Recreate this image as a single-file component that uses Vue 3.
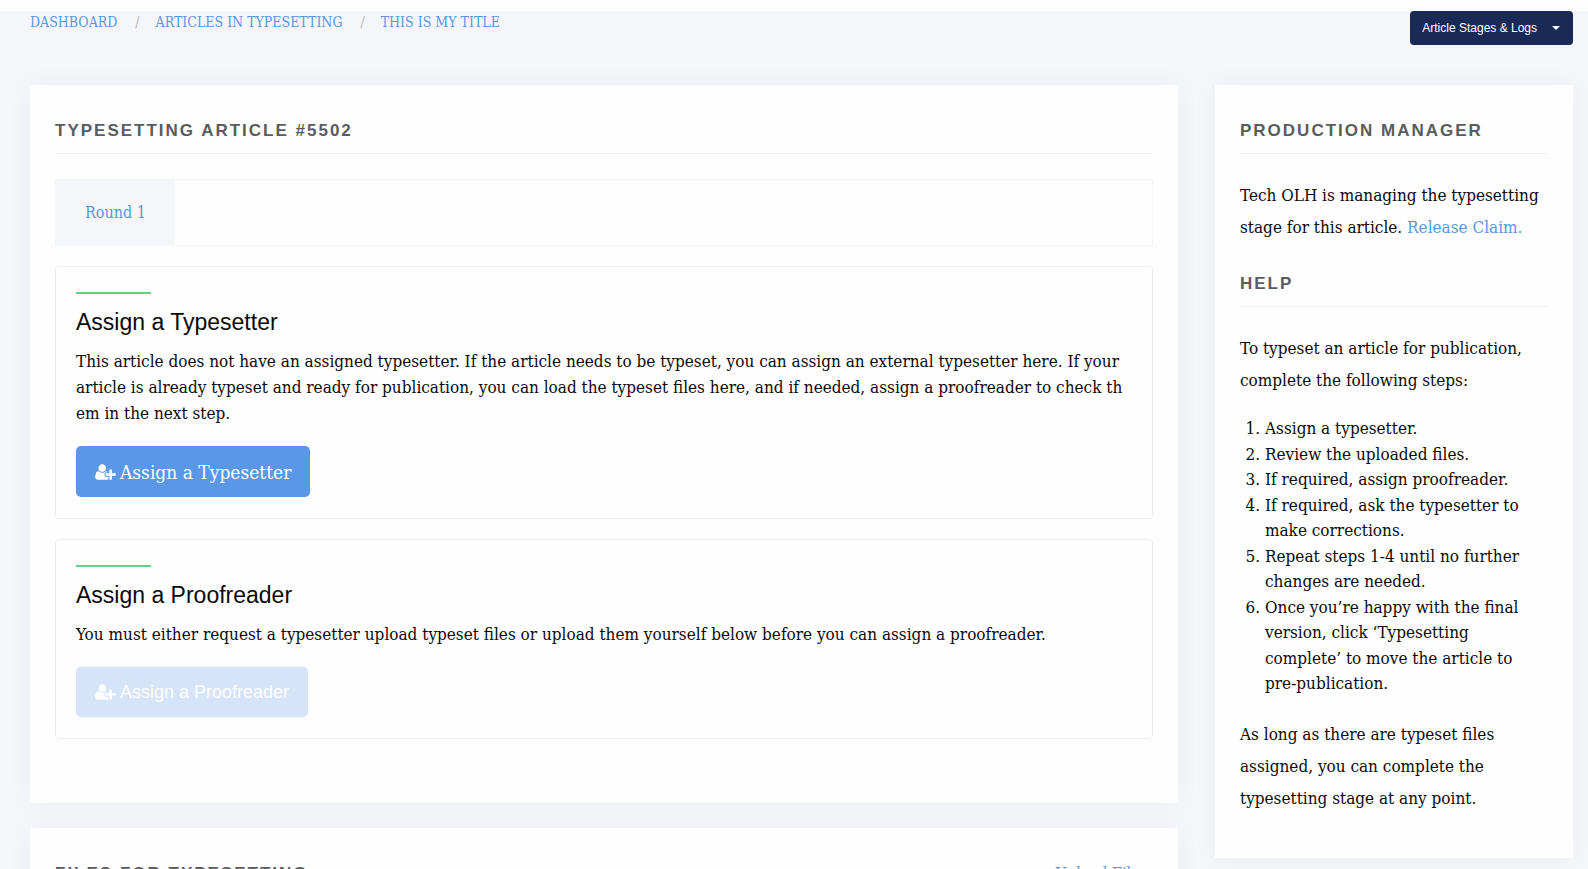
<script setup>
const crumbs = ['Dashboard', 'Articles in Typesetting', 'This is my title']
const steps = [
  'Assign a typesetter.',
  'Review the uploaded files.',
  'If required, assign proofreader.',
  'If required, ask the typesetter to make corrections.',
  'Repeat steps 1-4 until no further changes are needed.',
  'Once you’re happy with the final version, click ‘Typesetting complete’ to move the article to pre-publication.',
]
const userPlus =
  'M704 896q-159 0-271.5-112.5T320 512t112.5-271.5T704 128t271.5 112.5T1088 512 975.5 783.5 704 896zm960 128h352q13 0 22.5 9.5t9.5 22.5v192q0 13-9.5 22.5t-22.5 9.5h-352v352q0 13-9.5 22.5t-22.5 9.5h-192q-13 0-22.5-9.5t-9.5-22.5v-352h-352q-13 0-22.5-9.5t-9.5-22.5v-192q0-13 9.5-22.5t22.5-9.5h352V672q0-13 9.5-22.5t22.5-9.5h192q13 0 22.5 9.5t9.5 22.5v352zm-736 224q0 52 38 90t90 38h256v238q-68 50-171 50H267q-121 0-194-69T0 1405q0-53 3.5-103.5t14-109T44 1084t43-97.5 62-81 85.5-53.5T346 832q19 0 39 17 79 61 154.5 91.5T704 971t164.5-30.5T1023 849q20-17 39-17 132 0 217 96h-223q-52 0-90 38t-38 90v192z'
</script>

<template>
  <div class="page">
    <header class="topbar">
      <nav aria-label="Breadcrumb">
        <ol class="crumbs">
          <li v-for="c in crumbs" :key="c"><a href="#">{{ c }}</a></li>
        </ol>
      </nav>
      <button class="stages" type="button">
        Article Stages &amp; Logs
        <svg viewBox="0 0 8 4" aria-hidden="true"><path d="M0 0h8L4 4z" /></svg>
      </button>
    </header>

    <div class="columns">
      <main class="main">
        <section class="card first">
          <div class="title"><h2>Typesetting Article #5502</h2></div>
          <ul class="tabs">
            <li><a href="#round-1">Round 1</a></li>
          </ul>
          <div id="round-1">
            <article class="callout">
              <h3>Assign a Typesetter</h3>
              <p>
                This article does not have an assigned typesetter. If the article needs to be typeset, you can assign an external typesetter here. If your<br />
                article is already typeset and ready for publication, you can load the typeset files here, and if needed, assign a proofreader to check th<br />
                em in the next step.
              </p>
              <a class="action" href="#">
                <svg viewBox="0 0 2048 1792" aria-hidden="true"><path :d="userPlus" /></svg>
                <span>Assign a Typesetter</span>
              </a>
            </article>
            <article class="callout">
              <h3>Assign a Proofreader</h3>
              <p>You must either request a typesetter upload typeset files or upload them yourself below before you can assign a proofreader.</p>
              <button class="action" type="button" disabled>
                <svg viewBox="0 0 2048 1792" aria-hidden="true"><path :d="userPlus" /></svg>
                <span>Assign a Proofreader</span>
              </button>
            </article>
          </div>
        </section>

        <section class="card">
          <div class="title">
            <h2>Files for Typesetting</h2>
            <a href="#">Upload Files</a>
          </div>
        </section>
      </main>

      <aside class="card side">
        <div class="title"><h2>Production Manager</h2></div>
        <p>Tech OLH is managing the typesetting stage for this article. <a href="#">Release Claim.</a></p>
        <div class="title help"><h2>Help</h2></div>
        <p>To typeset an article for publication, complete the following steps:</p>
        <ol class="steps">
          <li v-for="s in steps" :key="s">{{ s }}</li>
        </ol>
        <p>As long as there are typeset files assigned, you can complete the typesetting stage at any point.</p>
      </aside>
    </div>
  </div>
</template>

<style>
html,
body {
  height: 100%;
  overflow: hidden;
}
#app {
  height: 100%;
}
</style>

<style scoped>
.page {
  box-sizing: border-box;
  height: 100%;
  overflow: hidden;
  border-top: 11px solid #fefefe;
  padding: 0 15px 0 30px;
  background: #f4f6fa;
  color: #0a0a0a;
  font: 17px/26px "DejaVu Serif Condensed", "DejaVu Serif", serif;
}
* {
  box-sizing: border-box;
}
a {
  color: #5a97e5;
  text-decoration: none;
}
h2,
h3,
p,
ol,
ul {
  margin: 0;
  padding: 0;
}
.topbar {
  display: flex;
  justify-content: space-between;
  align-items: flex-start;
  height: 74px;
}
.crumbs {
  display: flex;
  list-style: none;
  font-size: 14px;
  line-height: 22px;
  text-transform: uppercase;
}
.crumbs li + li::before {
  content: "/";
  margin: 0 16px 0 18px;
  color: #b8b8b8;
}
.stages {
  display: flex;
  align-items: center;
  gap: 15px;
  height: 34px;
  padding: 0 13px 0 12px;
  border: 0;
  border-radius: 4px;
  background: #1a2a57;
  color: #fefefe;
  font: 12px/12px "Liberation Sans", Arial, sans-serif;
}
.stages svg {
  width: 8px;
  height: 4px;
  fill: currentColor;
}
.columns {
  display: grid;
  grid-template-columns: minmax(0, 1148fr) minmax(0, 358fr);
  gap: 37px;
  align-items: start;
}
.main {
  display: grid;
  gap: 25px;
}
.card {
  padding: 30px 25px 50px;
  background: #fefefe;
  box-shadow: 0 0 25px rgba(0, 0, 0, 0.04);
}
.card.first {
  padding-bottom: 64px;
}
.card.side {
  padding-bottom: 44px;
}
.title {
  display: flex;
  justify-content: space-between;
  align-items: center;
  height: 39px;
  padding-bottom: 6px;
  border-bottom: 1px solid #f1f2f4;
}
.title a {
  padding-right: 6px;
  font-size: 16px;
}
h2 {
  color: #5a5c5e;
  font: 700 17px/30px "Liberation Sans", Arial, sans-serif;
  letter-spacing: 2px;
  text-transform: uppercase;
}
.tabs {
  display: flex;
  margin: 25px 0 20px;
  border: 1px solid #f4f5f8;
  list-style: none;
}
.tabs a {
  display: block;
  padding: 20px 29px 19px;
  background: #f4f6fa;
  font-size: 16px;
}
.callout {
  padding: 25px 20px 21px;
  border: 1px solid #ececec;
  border-radius: 4px;
}
.callout + .callout {
  margin-top: 20px;
}
.callout::before {
  content: "";
  display: block;
  width: 75px;
  height: 2px;
  background: #69cf82;
}
h3 {
  margin: 12px 0 10px;
  font: 23px/32px "Liberation Sans", Arial, sans-serif;
}
.callout p {
  margin-bottom: 20px;
}
.action {
  display: inline-flex;
  align-items: center;
  gap: 4px;
  height: 51px;
  padding: 0 19px;
  border: 0;
  border-radius: 5px;
  background: #5a97e5;
  color: #fefefe;
  font-size: 19px;
  vertical-align: top;
}
.action:disabled {
  height: 50px;
  background: #d5e4f9;
  font-family: "Liberation Sans", Arial, sans-serif;
  font-size: 18px;
}
.action svg {
  width: 21px;
  height: 18px;
  fill: currentColor;
}
.side p {
  line-height: 32px;
}
.side .title + p {
  margin-top: 25px;
}
.help {
  margin-top: 25px;
}
.steps {
  margin: 20px 0 21px;
  padding-left: 25px;
  line-height: 1.5;
}
</style>
